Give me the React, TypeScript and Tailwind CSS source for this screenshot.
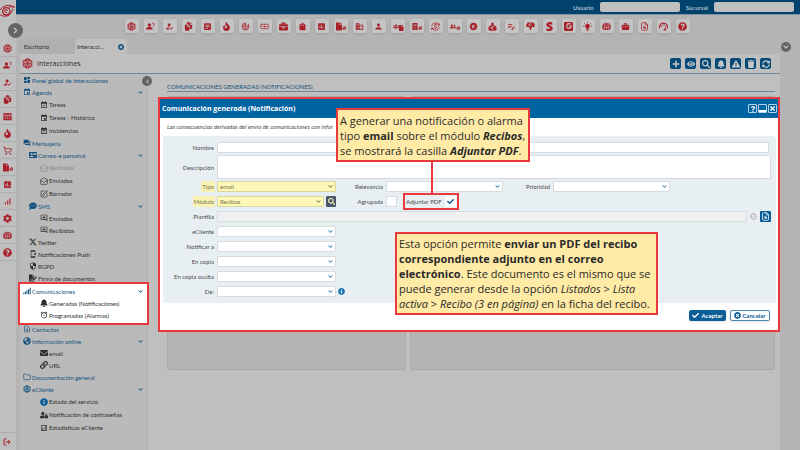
import type { ReactNode } from 'react';
import type { IconType } from 'react-icons';
import {
  FaBell, FaBriefcase, FaBuilding, FaCheck, FaChevronDown, FaCommentDots, FaEnvelope,
  FaEye, FaFile, FaFileSignature, FaFire, FaGlobeAmericas, FaGoogle, FaHome,
  FaInfoCircle, FaLink, FaPlus, FaQuestion, FaQuestionCircle, FaSearch, FaSignal, FaStripeS, FaSyncAlt,
  FaTimes, FaTimesCircle, FaTrash, FaUserFriends, FaUserLock, FaUsers, FaExclamationTriangle,
  FaChevronLeft, FaChevronRight, FaCog,
} from 'react-icons/fa';
import {
  MdAlarm, MdArticle, MdBusiness, MdCurrencyExchange, MdDashboard, MdEditNote, MdEvent, MdEventAvailable,
  MdEventNote, MdForum, MdHowToReg, MdInsertChart, MdOutlineAddComment, MdOutlineAnalytics, MdOutlineContactPage,
  MdOutlineSendToMobile, MdSecurity, MdShoppingBag, MdTrackChanges,
  MdSignalCellularAlt, MdContactMail, MdPerson,
} from 'react-icons/md';
import { FaXTwitter } from 'react-icons/fa6';
import { IoDocuments } from 'react-icons/io5';
import { RiMoneyEuroCircleFill } from 'react-icons/ri';
import { Banknote, FileSearch, Folder, LogOut, MailOpen, ShoppingCart, SquarePen } from 'lucide-react';

type IconProps = { className?: string };
type AnyIcon = IconType | ((props: IconProps) => ReactNode);

function HexMesh({ className }: IconProps) {
  return (
    <svg className={className} viewBox="0 0 24 24" fill="currentColor">
      <path d="M12 0l10.500 6v12L12 24 1.500 18V6z" />
      <path
        d="M12 1v6M1.500 6L7 9m15.500-3L17 9M7 9l5-2 5 2v6l-5 3-5-3zM12 18v6M7 15l-5.500 3M17 15l5.500 3M7 9l5 9 5-9zM1.500 12L7 9m0 6l-5.500-3m21 0L17 9m0 6l5.500-3M6 3.500L7 9m11-5.500L17 9M6 20.500L7 15m11 5.500L17 15"
        fill="none"
        stroke="#c4c4c4"
        strokeWidth="1"
      />
    </svg>
  );
}

function UserQuestion({ className }: IconProps) {
  return (
    <svg className={className} viewBox="0 0 24 24" fill="currentColor">
      <circle cx="9" cy="8" r="4.5" />
      <path d="M0 20c0-5 4-6.500 9-6.500s9 1.500 9 6.500z" />
      <path d="M17 6c0-3.500 5.500-3.500 5.500 0 0 2.200-2.700 2.200-2.700 4.500M19.800 13v1.500" fill="none" stroke="currentColor" strokeWidth="2" />
    </svg>
  );
}

function Calendar({ className }: IconProps) {
  return (
    <svg className={className} viewBox="0 0 24 24" fill="currentColor">
      <path d="M1 3h22v19H1z" />
      <path d="M1 8.500h22M5 12.500h3m2.500 0h3m2.500 0h3M5 17h3m2.500 0h3m2.500 0h3" stroke="#c4c4c4" strokeWidth="2" />
    </svg>
  );
}

function Pouch({ className }: IconProps) {
  return (
    <svg className={className} viewBox="0 0 24 24" fill="currentColor">
      <path d="M12 0l4 5-2 3c5 1 9 4 9 9 0 4-2 6-5 6H6c-3 0-5-2-5-6 0-5 4-8 9-9L8 5z" />
      <path d="M15.500 12.500c-5-2-7 1-7 3s2 5 7 3M7 15.500h6" fill="none" stroke="#c4c4c4" strokeWidth="2" />
    </svg>
  );
}

function HandDown({ className }: IconProps) {
  return (
    <svg className={className} viewBox="0 0 24 24" fill="currentColor">
      <path d="M5 1h14l4 5v7h-7l-4 10-4-10H1V6z" />
      <path d="M14.500 5c-4-1.500-6 .500-6 2.500s2 4 6 2.500M7 7.500h5" fill="none" stroke="#c4c4c4" strokeWidth="1.800" />
    </svg>
  );
}

function Bulb({ className }: IconProps) {
  return (
    <svg className={className} viewBox="0 0 24 24" fill="currentColor">
      <path d="M12 5a6 6 0 0 1 3.500 11v3h-7v-3A6 6 0 0 1 12 5zM9 20.500h6V23H9z" />
      <path d="M12 0v3M0 11h4M20 11h4M3 3l3 3M21 3l-3 3" stroke="currentColor" strokeWidth="2" />
    </svg>
  );
}

function Dome({ className }: IconProps) {
  return (
    <svg className={className} viewBox="0 0 24 24" fill="currentColor">
      <path d="M12 2c6 0 10 3 11.500 8v7L18 21H6L.500 17v-7C2 5 6 2 12 2z" />
      <path d="M1 10c4-3 7-3 11 0 4-3 7-3 11 0M7 8v12M17 8v12M12 10v11M5 6c4-2 10-2 14 0M1 15h22" fill="none" stroke="#c4c4c4" strokeWidth="1.200" />
    </svg>
  );
}

function Pot({ className }: IconProps) {
  return (
    <svg className={className} viewBox="0 0 24 24" fill="currentColor">
      <path d="M8 7V3h8v4h5l2 5-2 9H3l-2-9 2-5zm2 0h4V5h-4z" />
      <path d="M1 12.500h22" stroke="#c4c4c4" strokeWidth="1" />
    </svg>
  );
}

function Headset({ className }: IconProps) {
  return (
    <svg className={className} viewBox="0 0 24 24" fill="none" stroke="currentColor" strokeWidth="3">
      <path d="M2 17C0 8 6 3 12 3s12 5 10 14" />
      <path d="M5 14c1-5 5-6 7-6 4 0 6 3 6 7" strokeWidth="2" />
      <path d="M15 16l4 5M12 21h7" />
    </svg>
  );
}

function duo(A: IconType, B: IconType) {
  return function Duo({ className }: IconProps) {
    return (
      <span className={`flex items-end ${className}`}>
        <A className="h-full w-2/3 shrink-0" />
        <B className="h-2/3 w-1/2 shrink-0" />
      </span>
    );
  };
}

function GoogleBox({ className }: IconProps) {
  return (
    <span className={`flex items-center justify-center rounded-[1px] bg-[#a8202a] ${className}`}>
      <FaGoogle className="size-[6px] text-[#c4c4c4]" />
    </span>
  );
}

const FileHouse = duo(FaFile, FaHome);

const toolbar: [string, AnyIcon][] = [
  ['Interacciones', HexMesh],
  ['Consultas', UserQuestion],
  ['Altas', MdHowToReg],
  ['Documentos', IoDocuments],
  ['Listados', MdArticle],
  ['Oportunidades', FaFire],
  ['Objetivos', MdTrackChanges],
  ['Cobros', Banknote],
  ['Cartera', FaBriefcase],
  ['Productos', MdShoppingBag],
  ['Gráficos', MdInsertChart],
  ['Contratos', FileHouse],
  ['Empresas', MdBusiness],
  ['Agentes', MdPerson],
  ['Colectivos', duo(FaUsers, FaFile)],
  ['Riesgos', duo(FaBuilding, FaHome)],
  ['Cambio', MdCurrencyExchange],
  ['Clientes', duo(FaUserFriends, FaHome)],
  ['Recibos', RiMoneyEuroCircleFill],
  ['Comisiones', Pouch],
  ['Notas', MdEditNote],
  ['Liquidaciones', HandDown],
  ['Siniestros', FaStripeS],
  ['Google', GoogleBox],
  ['Ideas', Bulb],
  ['Módulos', Dome],
  ['Herramientas', Pot],
  ['Buscar documento', FileSearch],
  ['Soporte', Headset],
  ['Ayuda', FaQuestionCircle],
];

const rail: [string, AnyIcon][] = [
  ['Interacciones', HexMesh],
  ['Consultas', UserQuestion],
  ['Altas', MdHowToReg],
  ['Documentos', IoDocuments],
  ['Calendario', Calendar],
  ['Oportunidades', FaFire],
  ['Compras', ShoppingCart],
  ['Contratos', FileHouse],
  ['Gráficos', MdInsertChart],
  ['Estadísticas', MdSignalCellularAlt],
  ['Configuración', FaCog],
  ['Módulos', Dome],
  ['Ayuda', FaQuestionCircle],
];

interface MenuEntry {
  label: string;
  icon: AnyIcon;
  level: 0 | 1 | 2;
  link?: boolean;
  open?: boolean;
  tall?: boolean;
  muted?: boolean;
  blueIcon?: boolean;
}

const menuTop: MenuEntry[] = [
  { label: 'Panel global de interacciones', icon: MdDashboard, level: 0, link: true },
  { label: 'Agenda', icon: MdEvent, level: 0, link: true, open: true },
  { label: 'Tareas', icon: MdEventAvailable, level: 2, tall: true },
  { label: 'Tareas - Histórico', icon: MdEvent, level: 2, tall: true },
  { label: 'Incidencias', icon: MdEventNote, level: 2, tall: true },
  { label: 'Mensajería', icon: MdForum, level: 0, link: true },
  { label: 'Correo-e personal', icon: MdContactMail, level: 1, link: true, open: true },
  { label: 'Recibidos', icon: MailOpen, level: 2, tall: true, muted: true },
  { label: 'Enviados', icon: MailOpen, level: 2, tall: true },
  { label: 'Borrador', icon: SquarePen, level: 2, tall: true },
  { label: 'SMS', icon: FaCommentDots, level: 1, link: true, open: true },
  { label: 'Enviados', icon: MdOutlineAddComment, level: 2 },
  { label: 'Recibidos', icon: MdOutlineAddComment, level: 2 },
  { label: 'Twitter', icon: FaXTwitter, level: 1 },
  { label: 'Notificaciones Push', icon: MdOutlineSendToMobile, level: 1 },
  { label: 'RGPD', icon: MdSecurity, level: 1 },
  { label: 'Firma de documentos', icon: FaFileSignature, level: 1 },
];

const menuHighlighted: MenuEntry[] = [
  { label: 'Comunicaciones', icon: FaSignal, level: 0, link: true, open: true },
  { label: 'Generadas (Notificaciones)', icon: FaBell, level: 2 },
  { label: 'Programadas (Alarmas)', icon: MdAlarm, level: 2 },
];

const menuBottom: MenuEntry[] = [
  { label: 'Contactos', icon: MdOutlineContactPage, level: 0, link: true },
  { label: 'Información online', icon: FaGlobeAmericas, level: 0, link: true, open: true },
  { label: 'email', icon: FaEnvelope, level: 2 },
  { label: 'URL', icon: FaLink, level: 2 },
  { label: 'Documentación general', icon: Folder, level: 0, link: true },
  { label: 'eCliente', icon: HexMesh, level: 0, link: true, open: true },
  { label: 'Estado del servicio', icon: FaInfoCircle, level: 2, tall: true, blueIcon: true },
  { label: 'Notificación de contraseñas', icon: FaUserLock, level: 2, tall: true },
  { label: 'Estadísticas eCliente', icon: MdOutlineAnalytics, level: 2, tall: true },
];

function MenuList({ entries }: { entries: MenuEntry[] }) {
  return (
    <ul>
      {entries.map((e, i) => {
        const Icon = e.icon;
        const indent = e.level === 0 ? 'pl-[3px]' : e.level === 1 ? 'pl-[9px]' : 'pl-5';
        const color = e.link ? 'text-[#14527d]' : e.muted ? 'text-[#8c8c8c]' : 'text-[#2e2e2e]';
        return (
          <li key={i} className={e.tall ? 'h-[13px]' : 'h-3'}>
            <a href="#" className={`flex h-full items-center gap-[1px] pr-1 ${indent} ${color}`}>
              <Icon className={`size-2 shrink-0 ${e.blueIcon ? 'text-[#075a96]' : ''}`} />
              <span className="flex-1 whitespace-nowrap">{e.label}</span>
              {e.open && <FaChevronDown className="size-[5px]" />}
            </a>
          </li>
        );
      })}
    </ul>
  );
}

const actions: [string, IconType][] = [
  ['Nuevo', FaPlus],
  ['Ver', FaEye],
  ['Buscar', FaSearch],
  ['Avisos', FaBell],
  ['Alertas', FaExclamationTriangle],
  ['Eliminar', FaTrash],
  ['Actualizar', FaSyncAlt],
];

function Label({ htmlFor, marked, className = '', children }: { htmlFor: string; marked?: boolean; className?: string; children: ReactNode }) {
  return (
    <span className={`flex shrink-0 justify-end ${className}`}>
      <label htmlFor={htmlFor} className={`whitespace-nowrap px-[1px] leading-[11px] ${marked ? 'bg-[#f8f3b4] text-[#77734a]' : ''}`}>
        {children}
      </label>
    </span>
  );
}

function Select({ id, value = '', marked, width = 'w-[119px]' }: { id: string; value?: string; marked?: boolean; width?: string }) {
  return (
    <div className={`relative shrink-0 ${width}`}>
      <select
        id={id}
        defaultValue={value}
        className={`block h-[11px] w-full appearance-none rounded-[1px] border px-[2px] leading-[9px] ${marked ? 'border-[#d9d6a0] bg-[#fdf8b5] text-[#77734a]' : 'border-[#d5dbdf] bg-white'}`}
      >
        <option>{value}</option>
      </select>
      <FaChevronDown className={`pointer-events-none absolute top-[3px] right-[3px] size-[5px] ${marked ? 'text-[#6d6b45]' : 'text-[#2173ab]'}`} />
    </div>
  );
}

function NotificationDialog() {
  return (
    <section role="dialog" aria-label="Comunicación generada" className="absolute top-[23px] right-0 left-[10px] border-2 border-[#e8393f] bg-white text-[#4a4a4a]">
      <header className="flex h-[19px] items-center gap-[1px] bg-[#0063a2] pr-[1px] pl-[2px] text-white">
        <h2 className="flex-1 font-['Open_Sans',sans-serif] text-[7px] font-bold">Comunicación generada (Notificación)</h2>
        <button aria-label="Ayuda" className="flex size-[9px] items-center justify-center rounded-[1px] border border-[#b9d3e6]">
          <FaQuestion className="size-[6px]" />
        </button>
        <button aria-label="Minimizar" className="flex size-[9px] items-end justify-center rounded-[1px] border border-[#b9d3e6]">
          <span className="h-[2px] w-[7px] bg-white" />
        </button>
        <button aria-label="Cerrar" className="flex size-[9px] items-center justify-center rounded-[1px] border border-[#b9d3e6]">
          <FaTimes className="size-[7px]" />
        </button>
      </header>

      <p className="h-[18px] pl-[7px] leading-[18px] italic">
        Las consecuencias derivadas del envío de comunicaciones con infor
      </p>

      <form className="mr-[2px] ml-[3px] flex flex-col gap-1 rounded-[2px] bg-[#e8eff3] pt-[6px] pr-[5px] pb-[6px]">
        <div className="flex gap-[2px] pr-[2px]">
          <Label htmlFor="nombre" className="w-[52px]">Nombre</Label>
          <input id="nombre" className="h-[11px] min-w-0 flex-1 rounded-[1px] border border-[#d5dbdf] bg-white" />
        </div>
        <div className="-mt-[2px] flex items-center gap-[2px]">
          <Label htmlFor="descripcion" className="w-[52px]">Descripción</Label>
          <textarea id="descripcion" className="block h-6 min-w-0 flex-1 resize-none rounded-[1px] border border-[#d5dbdf] bg-white" />
        </div>
        <div className="-mt-[2px] flex gap-[2px]">
          <Label htmlFor="tipo" marked className="w-[52px]">Tipo</Label>
          <Select id="tipo" value="email" marked />
          <Label htmlFor="relevancia" className="w-[46px]">Relevancia</Label>
          <Select id="relevancia" width="w-[117px]" />
          <Label htmlFor="prioridad" className="w-[46px]">Prioridad</Label>
          <Select id="prioridad" width="w-[117px]" />
        </div>
        <div className="flex gap-[2px]">
          <Label htmlFor="modulo" marked className="w-[52px]">Módulo</Label>
          <Select id="modulo" value="Recibos" marked width="w-[107px]" />
          <button type="button" aria-label="Buscar módulo" className="flex h-[11px] w-[10px] items-center justify-center rounded-[1px] bg-[#46586a] text-[#f8f3b4]">
            <FaSearch className="size-[7px]" />
          </button>
          <Label htmlFor="agrupada" className="w-[46px]">Agrupada</Label>
          <input id="agrupada" type="checkbox" className="size-[11px] appearance-none rounded-[1px] border border-[#d5dbdf] bg-white" />
          <div className="-my-[3px] ml-[4px] flex w-[56px] items-center justify-between border-2 border-[#e8393f] px-[1px]">
            <label htmlFor="adjuntar" className="whitespace-nowrap">Adjuntar PDF</label>
            <span className="relative">
              <input id="adjuntar" type="checkbox" defaultChecked className="block size-[11px] appearance-none rounded-[1px] bg-white" />
              <FaCheck className="pointer-events-none absolute top-[2px] left-[2px] size-[7px] text-[#0b5d96]" />
            </span>
          </div>
        </div>
        <div className="flex items-center gap-[2px]">
          <Label htmlFor="plantilla" className="w-[52px]">Plantilla</Label>
          <input id="plantilla" readOnly className="h-[11px] min-w-0 flex-1 rounded-[1px] border border-[#d8dcdf] bg-[#f0f0f0]" />
          <button type="button" aria-label="Limpiar plantilla" className="flex size-[9px] items-center justify-center rounded-[1px] bg-[#f0f0f0] text-[#c4c4c4]">
            <FaTimesCircle className="size-[7px]" />
          </button>
          <button type="button" aria-label="Buscar plantilla" className="flex size-[11px] items-center justify-center rounded-[1px] bg-[#0b5d96] text-white">
            <FileSearch className="size-[9px]" />
          </button>
        </div>
        <div className="flex gap-[2px]">
          <Label htmlFor="ecliente" className="w-[52px]">eCliente</Label>
          <Select id="ecliente" />
        </div>
        <div className="flex gap-[2px]">
          <Label htmlFor="notificar" className="w-[52px]">Notificar a</Label>
          <Select id="notificar" />
        </div>
        <div className="flex gap-[2px]">
          <Label htmlFor="copia" className="w-[52px]">En copia</Label>
          <Select id="copia" />
        </div>
        <div className="flex gap-[2px]">
          <Label htmlFor="oculta" className="w-[52px]">En copia oculta</Label>
          <Select id="oculta" />
        </div>
        <div className="flex items-center gap-[2px]">
          <Label htmlFor="de" className="w-[52px]">De:</Label>
          <Select id="de" />
          <FaInfoCircle className="size-[7px] text-[#1c78b4]" />
        </div>
      </form>

      <footer className="flex justify-end gap-1 pt-[7px] pr-2 pb-[9px] font-bold">
        <button className="flex h-[11px] w-[37px] items-center justify-center gap-[2px] rounded-[2px] bg-[#0b5d96] text-white shadow-sm">
          <FaCheck className="size-[7px]" />
          Aceptar
        </button>
        <button className="flex h-[11px] w-[40px] items-center justify-center gap-[1px] rounded-[2px] border border-[#4a87b3] bg-white text-[#0b5d96] shadow-sm">
          <FaTimesCircle className="size-[7px]" />
          Cancelar
        </button>
      </footer>

      <div className="absolute top-[62px] left-[271px] h-8 w-[2px] bg-[#e8393f]" />
      <p className="absolute top-[9px] left-[176px] w-[194px] border-2 border-[#e8393f] bg-[#ffeaa6] pt-[3px] pb-[2px] pl-[2px] font-['Open_Sans',sans-serif] text-[11px] leading-[15px] whitespace-nowrap text-[#2a2a2a]">
        A generar una notificación o alarma<br />
        tipo <b>email</b> sobre el módulo <b><i>Recibos</i></b>,<br />
        se mostrará la casilla <b><i>Adjuntar PDF</i></b>.
      </p>
      <p className="absolute top-[133px] left-[235px] w-[263px] border-2 border-[#e8393f] bg-[#ffeaa6] py-[2px] pl-[2px] font-['Open_Sans',sans-serif] text-[11px] leading-[15px] whitespace-nowrap text-[#2a2a2a]">
        Esta opción permite <b>enviar un PDF del recibo</b><br />
        <b>correspondiente adjunto en el correo</b><br />
        <b>electrónico</b>. Este documento es el mismo que se<br />
        puede generar desde la opción <i>Listados</i> &gt; <i>Lista</i><br />
        <i>activa</i> &gt; <i>Recibo (3 en página)</i> en la ficha del recibo.
      </p>
    </section>
  );
}

export default function App() {
  return (
    <div className="flex h-screen overflow-hidden bg-[#b4b4b4] font-[Lato,sans-serif] text-[6px] leading-[9px] text-[#2e2e2e]">
      <nav aria-label="Módulos" className="relative flex w-4 shrink-0 flex-col bg-[#bfbfbf] text-[#a8202a]">
        <svg className="mt-1 h-[14px] w-[15px]" viewBox="0 0 45 42" fill="none" stroke="currentColor">
          <path d="M0 18C10 3 30 0 44 10C36 8 30 8 25 10" strokeWidth="3" />
          <path d="M0 32C14 42 34 36 38 16" strokeWidth="3" />
          <circle cx="19" cy="22" r="11" strokeWidth="4" />
          <text x="13" y="28" fontSize="20" fontWeight="bold" fill="currentColor" stroke="none">e</text>
          <path d="M34 14l10 4" stroke="#6b6b6b" strokeWidth="2" />
        </svg>
        <button aria-label="Expandir" className="absolute top-[23px] left-2 flex size-[15px] items-center justify-center rounded-full bg-[#646464] text-[#d0d0d0]">
          <FaChevronRight className="size-[7px]" />
        </button>
        <div className="mt-[22px] flex-1">
          {rail.map(([label, Icon]) => (
            <a key={label} href="#" aria-label={label} className="flex h-[17px] items-center justify-center border-b border-[#adadad] pr-[2px]">
              <Icon className="size-[9px]" />
            </a>
          ))}
        </div>
        <a href="#" aria-label="Salir" className="flex h-[18px] items-center justify-center border-t border-[#adadad] pr-[2px]">
          <LogOut className="size-[8px]" strokeWidth={3} />
        </a>
      </nav>

      <div className="flex min-w-0 flex-1 flex-col">
        <header className="flex h-[15px] shrink-0 items-center justify-end gap-[6px] border-b border-[#7d95a6] bg-[#00426c] pr-[6px] text-[#a9bfce]">
          <label htmlFor="usuario" className="font-bold">Usuario</label>
          <input id="usuario" className="h-[10px] w-20 rounded-[2px] bg-[#bfbfbf]" />
          <label htmlFor="sucursal" className="font-bold">Sucursal</label>
          <input id="sucursal" className="h-[10px] w-20 rounded-[2px] bg-[#bfbfbf]" />
        </header>

        <div className="flex shrink-0 justify-center gap-[5px] pt-1 pr-[2px]">
          {toolbar.map(([label, Icon]) => (
            <button key={label} aria-label={label} className="flex size-[14px] shrink-0 items-center justify-center rounded-[2px] bg-[#c4c4c4] text-[#a8202a] shadow">
              <Icon className="size-[9px]" />
            </button>
          ))}
        </div>

        <div className="mt-[6px] flex h-[15px] shrink-0 gap-[1px] pl-[5px]">
          <a href="#" className="flex w-[53px] items-center rounded-t-[2px] bg-[#b0b0b0] pl-[3px] shadow-sm">Escritorio</a>
          <div className="flex w-[52px] items-center justify-between rounded-t-[2px] bg-[#bfbfbf] pr-[3px] pl-[2px]">
            <a href="#">Interacci...</a>
            <button aria-label="Cerrar pestaña" className="text-[#0b4f7e]"><FaTimesCircle className="size-[6px]" /></button>
          </div>
          <button aria-label="Más pestañas" className="mr-[9px] ml-auto flex size-[10px] items-center justify-center self-center rounded-full bg-[#646464] text-[#d0d0d0]">
            <FaChevronDown className="size-[6px]" />
          </button>
        </div>

        <main className="mr-5 ml-1 flex min-h-0 flex-1 flex-col bg-[#bfbfbf]">
          <div className="flex h-5 shrink-0 items-center border-b border-[#6f8698] pr-[9px] pl-[2px]">
            <HexMesh className="size-[11px] text-[#a8202a]" />
            <h1 className="ml-1 flex-1 font-['Open_Sans',sans-serif] text-[7px]">Interacciones</h1>
            <div className="flex gap-1">
              {actions.map(([label, Icon]) => (
                <button key={label} aria-label={label} className="flex size-[11px] items-center justify-center rounded-[2px] bg-[#064a78] text-[#c9c9c9]">
                  <Icon className="size-[8px]" />
                </button>
              ))}
            </div>
          </div>

          <div className="relative flex min-h-0 flex-1">
            <aside className="relative w-32 shrink-0 border-r border-[#b0b0b0] bg-[#bababa]">
              <MenuList entries={menuTop} />
              <div className="bg-white pt-[1px] pb-[2px] outline-2 outline-[#e8393f]">
                <MenuList entries={menuHighlighted} />
              </div>
              <MenuList entries={menuBottom} />
              <button aria-label="Plegar menú" className="absolute top-[2px] -right-[5px] flex size-[10px] items-center justify-center rounded-full bg-[#646464] text-[#d0d0d0]">
                <FaChevronLeft className="size-[5px]" />
              </button>
            </aside>

            <div className="flex min-w-0 flex-1 flex-col pt-2 pr-[5px] pb-20 pl-[19px]">
              <h2 className="h-[10px] shrink-0 border-b border-[#6f8698] text-[#14527d]">COMUNICACIONES GENERADAS (NOTIFICACIONES)</h2>
              <div className="mt-1 flex min-h-0 flex-1 gap-1">
                <div className="w-[239px] rounded-[2px] border border-[#a9a9a9] bg-[#b4b4b4]" />
                <div className="flex-1 rounded-[2px] border border-[#a9a9a9] bg-[#b4b4b4]" />
              </div>
            </div>

            <div className="absolute inset-x-0 top-0 left-32">
              <NotificationDialog />
            </div>
          </div>
        </main>
      </div>
    </div>
  );
}
